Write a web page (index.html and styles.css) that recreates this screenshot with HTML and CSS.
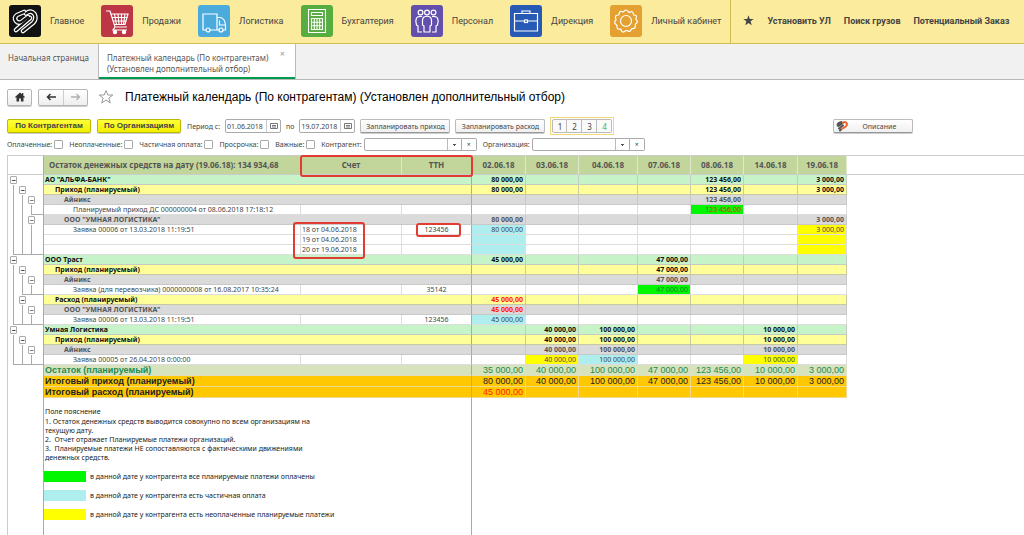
FILE: index.html
```html
<!DOCTYPE html>
<html lang="ru">
<head>
<meta charset="utf-8">
<title>Платежный календарь</title>
<link rel="stylesheet" href="styles.css">
</head>
<body>
<header class="topbar">
  <nav class="sections">
    <a class="section" href="#"><svg class="tile black" viewBox="0 0 32 32"><g fill="none" stroke-linejoin="round" stroke-linecap="round"><g stroke="#fff" stroke-width="4.600"><path d="M15 7 8 10Q4.500 12.500 7 16 9.500 19 13 16.500L19 12"/><path d="M17 8.500Q22 4.500 25.500 9 28 14 24 18L14 26"/><path d="M21 13 7 25"/></g><g stroke="#111" stroke-width="2.200"><path d="M15 7 8 10Q4.500 12.500 7 16 9.500 19 13 16.500L19 12"/><path d="M17 8.500Q22 4.500 25.500 9 28 14 24 18L14 26"/><path d="M21 13 7 25"/></g></g></svg><span>Главное</span></a>
    <a class="section" href="#"><svg class="tile red" viewBox="0 0 32 32"><g fill="none" stroke="#fff" stroke-width="1.2"><path d="M5 6h4l5 16h12M9.500 9H27l-3 10.500H13M10.500 12.500H26M11.500 16H25M13.500 9l2 10.500M17 9l1 10.500M20.500 9v10.500M24 9l-1.500 10.500M14 22l-2 3h14"/><circle cx="14" cy="27" r="1.600" fill="#fff"/><circle cx="23" cy="27" r="1.600" fill="#fff"/></g></svg><span>Продажи</span></a>
    <a class="section" href="#"><svg class="tile sky" viewBox="0 0 32 32"><g fill="none" stroke="#fff" stroke-width="1.2"><path d="M8 25H5V9h14v16h-7M19 12.500h3.500q4.500 1 5 8V25H25M21 25h-2M21.500 15.500v4.500h5.500"/><circle cx="10" cy="25" r="2"/><circle cx="23" cy="25" r="2"/></g></svg><span>Логистика</span></a>
    <a class="section" href="#"><svg class="tile green" viewBox="0 0 32 32"><g fill="none" stroke="#fff" stroke-width="1.1"><path d="M7.500 4.500h17v23h-17zM10.500 7.500h11v3h-11zM10.500 13.500h11v11h-11zM10.500 17.200h11M10.500 20.800h11M13.300 13.500v11M16 13.500v11M18.700 13.500v11"/></g></svg><span>Бухгалтерия</span></a>
    <a class="section" href="#"><svg class="tile violet" viewBox="0 0 32 32"><g fill="none" stroke="#fff" stroke-width="1.2" stroke-linejoin="round"><circle cx="9.500" cy="7.500" r="2.400"/><circle cx="16" cy="7.500" r="2.400"/><circle cx="22.500" cy="7.500" r="2.400"/><path d="M13 12q3-1.500 6 0 1.500 1 1.500 3.500V20l-1.500 1v6h-6v-6l-1.500-1v-4.500Q11.500 13 13 12zM11 11.500Q7 11 5.500 13 4 16 5.500 20l1.500 1v6h4M21 11.500q4-.500 5.500 1.500 1.500 3 0 7L25 21v6h-4"/></g></svg><span>Персонал</span></a>
    <a class="section" href="#"><svg class="tile blue" viewBox="0 0 32 32"><g fill="none" stroke="#fff" stroke-width="1.2"><path d="M4.500 8.500h23v17.500h-23zM12 8.500V6h8v2.500M4.500 16h10M17.500 16h10"/><rect x="14.500" y="15" width="3" height="2.500"/></g></svg><span>Дирекция</span></a>
    <a class="section" href="#"><svg class="tile orange" viewBox="0 0 32 32"><g fill="none" stroke="#fff" stroke-width="1.200" stroke-linejoin="round"><circle cx="16" cy="16" r="5.500"/><path d="M13.500 7Q16 3 18.500 7L19 7.500Q23 5 23.500 9.500L23.700 10Q28 10 25.700 14L26 14.500Q29 17 25.500 19L25.300 19.500Q26 24 22 23.500L21.500 24Q20 28 17 25.500L16 25.500Q12 29 11 24.500L10.500 24Q6 25 7 20.500L6.500 20Q3 17.500 6 15L6 14.500Q4 10 8.500 10L9 9.500Q9 5 13.500 7z"/></g></svg><span>Личный кабинет</span></a>
  </nav>
  <nav class="favorites">
    <svg class="fav-star" viewBox="0 0 12 12"><path fill="#444" d="M6 .300 7.400 4.300 11.700 4.300 8.300 6.900 9.500 11.200 6 8.700 2.500 11.200 3.700 6.900.300 4.300 4.600 4.300z"/></svg>
    <a href="#">Установить УЛ</a>
    <a href="#">Поиск грузов</a>
    <a href="#">Потенциальный Заказ</a>
  </nav>
</header>
<div class="tabs">
  <a class="tab" href="#">Начальная страница</a>
  <div class="tab active"><a href="#">Платежный календарь (По контрагентам)<br>(Установлен дополнительный отбор)</a><button class="tab-close" aria-label="Закрыть">×</button></div>
</div>
<main>
  <div class="titlebar">
    <button class="nav-btn" aria-label="Домой"><svg viewBox="0 0 10 10"><path fill="#333" d="M5 .500 0 5l.800.800L1.500 5.200V9.500h2.600V6.500h1.800v3h2.600V5.200l.700.600L10 5 8.300 3.400V1H7v1.200z"/></svg></button>
    <div class="nav-pair">
      <button aria-label="Назад"><svg viewBox="0 0 10 10"><path fill="none" stroke="#333" stroke-width="1.500" d="M10 5H1.500M4.500 2l-3 3 3 3"/></svg></button>
      <button aria-label="Вперед"><svg viewBox="0 0 10 10"><path fill="none" stroke="#b0b0b0" stroke-width="1.300" d="M0 5h8.500M5.500 2l3 3-3 3"/></svg></button>
    </div>
    <svg class="star" viewBox="0 0 16 16"><path fill="none" stroke="#999" d="M8 1.500 9.800 6H14.800L10.900 9 12.300 14 8 11 3.700 14 5.100 9 1.200 6H6.200z"/></svg>
    <h1>Платежный календарь (По контрагентам) (Установлен дополнительный отбор)</h1>
  </div>
  <div class="commands">
    <button class="btn accent">По Контрагентам</button>
    <button class="btn accent">По Организациям</button>
    <label for="from">Период с:</label>
    <span class="date"><input id="from" value="01.06.2018"><button aria-label="Календарь"><svg viewBox="0 0 8 8"><path fill="none" stroke="#777" d="M.500 1.500h7v5h-7zM2 3.500h4M2 5h4"/></svg></button></span>
    <label for="to">по</label>
    <span class="date"><input id="to" value="19.07.2018"><button aria-label="Календарь"><svg viewBox="0 0 8 8"><path fill="none" stroke="#777" d="M.500 1.500h7v5h-7zM2 3.500h4M2 5h4"/></svg></button></span>
    <button class="btn plan">Запланировать приход</button>
    <button class="btn plan">Запланировать расход</button>
    <div class="pager"><button>1</button><button>2</button><button>3</button><button class="on">4</button></div>
    <button class="btn about"><svg viewBox="0 0 12 12"><g fill="none" stroke-linecap="round"><path stroke="#555" stroke-width="2" d="M5.500 2 2.500 3.200Q1 4.500 2.200 6L6 4M3 8.500 7 5.500M4 10.500 5 9.500"/><path stroke="#999" stroke-width=".700" d="M3 7.200 7.500 3.800"/><path stroke="#e8622a" stroke-width="2" d="M7 3Q9 .800 10.600 3 11.500 5 9.800 6.500L6.500 8.500"/></g></svg><span>Описание</span></button>
  </div>
  <div class="filters">
    <label>Оплаченные: <input type="checkbox"></label>
    <label>Неоплаченные: <input type="checkbox"></label>
    <label>Частичная оплата: <input type="checkbox"></label>
    <label>Просрочка: <input type="checkbox"></label>
    <label>Важные: <input type="checkbox"></label>
    <div class="combo"><label for="partner">Контрагент:</label><select id="partner"><option></option></select><button aria-label="Очистить">×</button></div>
    <div class="combo"><label for="org">Организация:</label><select id="org"><option></option></select><button aria-label="Очистить">×</button></div>
  </div>
  <table class="sheet">
    <colgroup><col class="c-tree"><col class="c-name"><col class="c-bill"><col class="c-ttn"><col class="c-d1"><col class="c-d2"><col class="c-d3"><col class="c-d2"><col class="c-d2"><col class="c-d1"><col class="c-d4"><col></colgroup>
    <thead>
      <tr><td class="tree"></td><th class="name">Остаток денежных средств на дату (19.06.18): 134 934,68</th><th class="marked">Счет<span class="mark mark-head"></span></th><th class="split">ТТН</th><th>02.06.18</th><th>03.06.18</th><th>04.06.18</th><th>07.06.18</th><th>08.06.18</th><th>14.06.18</th><th>19.06.18</th><td></td></tr>
    </thead>
    <tbody>
      <tr class="partner"><td class="tree"><div><button>−</button></div></td><td>АО "АЛЬФА-БАНК"</td><td></td><td class="split"></td><td>80 000,00</td><td></td><td></td><td></td><td>123 456,00</td><td></td><td>3 000,00</td><td></td></tr>
      <tr class="flow"><td class="tree"><div><i></i><button>−</button></div></td><td>Приход (планируемый)</td><td></td><td class="split"></td><td>80 000,00</td><td></td><td></td><td></td><td>123 456,00</td><td></td><td>3 000,00</td><td></td></tr>
      <tr class="firm"><td class="tree"><div><i></i><i></i><button>−</button></div></td><td>Айникс</td><td></td><td class="split"></td><td></td><td></td><td></td><td></td><td>123 456,00</td><td></td><td></td><td></td></tr>
      <tr class="doc"><td class="tree"><div class="end3"><i></i><i></i><i></i></div></td><td>Планируемый приход ДС 000000004 от 08.06.2018 17:18:12</td><td></td><td class="split"></td><td></td><td></td><td></td><td></td><td class="paid late">123 456,00</td><td></td><td></td><td></td></tr>
      <tr class="firm"><td class="tree"><div><i></i><i></i><button>−</button></div></td><td>ООО "УМНАЯ ЛОГИСТИКА"</td><td></td><td class="split"></td><td>80 000,00</td><td></td><td></td><td></td><td></td><td></td><td>3 000,00</td><td></td></tr>
      <tr class="doc"><td class="tree"><div><i></i><i></i><i></i></div></td><td>Заявка 00006 от 13.03.2018 11:19:51</td><td class="marked">18 от 04.06.2018<span class="mark mark-bills"></span></td><td class="split marked">123456<span class="mark mark-ttn"></span></td><td class="part">80 000,00</td><td></td><td></td><td></td><td></td><td></td><td class="unpaid">3 000,00</td><td></td></tr>
      <tr class="doc"><td class="tree"><div><i></i><i></i><i></i></div></td><td></td><td>19 от 04.06.2018</td><td class="split"></td><td class="part"></td><td></td><td></td><td></td><td></td><td></td><td class="unpaid"></td><td></td></tr>
      <tr class="doc"><td class="tree"><div class="end1"><i></i><i></i><i></i></div></td><td></td><td>20 от 19.06.2018</td><td class="split"></td><td class="part"></td><td></td><td></td><td></td><td></td><td></td><td class="unpaid"></td><td></td></tr>
      <tr class="partner"><td class="tree"><div><button>−</button></div></td><td>ООО Траст</td><td></td><td class="split"></td><td>45 000,00</td><td></td><td></td><td>47 000,00</td><td></td><td></td><td></td><td></td></tr>
      <tr class="flow"><td class="tree"><div><i></i><button>−</button></div></td><td>Приход (планируемый)</td><td></td><td class="split"></td><td></td><td></td><td></td><td>47 000,00</td><td></td><td></td><td></td><td></td></tr>
      <tr class="firm"><td class="tree"><div><i></i><i></i><button>−</button></div></td><td>Айникс</td><td></td><td class="split"></td><td></td><td></td><td></td><td>47 000,00</td><td></td><td></td><td></td><td></td></tr>
      <tr class="doc"><td class="tree"><div class="end2"><i></i><i></i><i></i></div></td><td>Заявка (для перевозчика) 0000000008 от 16.08.2017 10:35:24</td><td></td><td class="split">35142</td><td></td><td></td><td></td><td class="paid">47 000,00</td><td></td><td></td><td></td><td></td></tr>
      <tr class="flow"><td class="tree"><div><i></i><button>−</button></div></td><td>Расход (планируемый)</td><td></td><td class="split"></td><td class="minus">45 000,00</td><td></td><td></td><td></td><td></td><td></td><td></td><td></td></tr>
      <tr class="firm"><td class="tree"><div><i></i><i></i><button>−</button></div></td><td>ООО "УМНАЯ ЛОГИСТИКА"</td><td></td><td class="split"></td><td class="minus">45 000,00</td><td></td><td></td><td></td><td></td><td></td><td></td><td></td></tr>
      <tr class="doc"><td class="tree"><div class="end1"><i></i><i></i><i></i></div></td><td>Заявка 00006 от 13.03.2018 11:19:51</td><td></td><td class="split">123456</td><td class="part">45 000,00</td><td></td><td></td><td></td><td></td><td></td><td></td><td></td></tr>
      <tr class="partner"><td class="tree"><div><button>−</button></div></td><td>Умная Логистика</td><td></td><td class="split"></td><td></td><td>40 000,00</td><td>100 000,00</td><td></td><td></td><td>10 000,00</td><td></td><td></td></tr>
      <tr class="flow"><td class="tree"><div><i></i><button>−</button></div></td><td>Приход (планируемый)</td><td></td><td class="split"></td><td></td><td>40 000,00</td><td>100 000,00</td><td></td><td></td><td>10 000,00</td><td></td><td></td></tr>
      <tr class="firm"><td class="tree"><div><i></i><i></i><button>−</button></div></td><td>Айникс</td><td></td><td class="split"></td><td></td><td>40 000,00</td><td>100 000,00</td><td></td><td></td><td>10 000,00</td><td></td><td></td></tr>
      <tr class="doc"><td class="tree"><div class="end1"><i></i><i></i><i></i></div></td><td>Заявка 00005 от 26.04.2018 0:00:00</td><td></td><td class="split"></td><td></td><td class="unpaid">40 000,00</td><td class="part">100 000,00</td><td></td><td></td><td class="unpaid">10 000,00</td><td></td><td></td></tr>
      <tr class="total rest"><td class="tree"></td><td>Остаток (планируемый)</td><td></td><td class="split"></td><td>35 000,00</td><td>40 000,00</td><td>100 000,00</td><td>47 000,00</td><td>123 456,00</td><td>10 000,00</td><td>3 000,00</td><td></td></tr>
      <tr class="total"><td class="tree"></td><td>Итоговый приход (планируемый)</td><td></td><td class="split"></td><td>80 000,00</td><td>40 000,00</td><td>100 000,00</td><td>47 000,00</td><td>123 456,00</td><td>10 000,00</td><td>3 000,00</td><td></td></tr>
      <tr class="total"><td class="tree"></td><td>Итоговый расход (планируемый)</td><td></td><td class="split"></td><td class="minus">45 000,00</td><td></td><td></td><td></td><td></td><td></td><td></td><td></td></tr>
    </tbody>
    <tfoot>
      <tr><td class="tree"></td><td class="notes split" colspan="3">
        <p class="caption">Поле пояснение</p>
        <p>1. Остаток денежных средств выводится совокупно по всем организациям на<br>текущую дату.</p>
        <p>2.&nbsp; Отчет отражает Планируемые платежи организаций.</p>
        <p>3.&nbsp; Планируемые платежи НЕ сопоставляются с фактическими движениями<br>денежных средств.</p>
        <ul class="legend">
          <li><span class="swatch paid"></span>в данной дате у контрагента все планируемые платежи оплачены</li>
          <li><span class="swatch part"></span>в данной дате у контрагента есть частичная оплата</li>
          <li><span class="swatch unpaid"></span>в данной дате у контрагента есть неоплаченные планируемые платежи</li>
        </ul>
      </td><td colspan="8"></td></tr>
    </tfoot>
  </table>
</main>
</body>
</html>
```
FILE: styles.css
```css
* { box-sizing: border-box; }
body {
  margin: 0;
  background: #fff;
  color: #444;
  font: 7px/9px "Noto Sans", sans-serif;
}
a { color: inherit; text-decoration: none; }
button, input, select { margin: 0; font: inherit; color: inherit; padding: 0; }

.topbar {
  display: flex;
  height: 44px;
  background: #fbeb9c;
  border-bottom: 1px solid #cfbd52;
  font: 9px/12px Roboto, sans-serif;
  white-space: nowrap;
}
.sections { display: flex; gap: 17px; padding: 4px 9px 0 9px; }
.section { display: flex; align-items: center; gap: 9px; height: 33px; }
.tile { width: 32px; height: 32px; border-radius: 3px; }
.black { background: #111; }
.red { background: #bd3646; }
.sky { background: #4babdd; }
.green { background: #57ad3f; }
.violet { background: #6350ac; }
.blue { background: #265ab5; }
.orange { background: #e5a032; }
.favorites {
  display: flex;
  align-items: center;
  gap: 13px;
  padding: 0 6px 2px 12px;
  border-left: 1px solid #cfbd52;
  font-weight: bold;
}
.fav-star { width: 11px; height: 11px; }

.tabs {
  display: flex;
  height: 36px;
  background: #f1f1f1;
  border-bottom: 1px solid #b8b8b8;
  font: 8px/11px "Noto Sans", sans-serif;
  color: #555;
}
.tab { padding: 8px 9px 0 8px; }
.tab.active {
  display: flex;
  gap: 10px;
  background: #fff;
  border: solid #bbb;
  border-width: 0 1px;
  box-shadow: inset 0 -2px #009a4e;
}
.tab-close { align-self: flex-start; width: 8px; height: 5px; border: 0; background: none; color: #999; line-height: 5px; font-size: 9px; margin-top: -1px; }

.titlebar { display: flex; align-items: center; height: 34px; padding: 0 7px; }
.nav-btn, .nav-pair {
  height: 17px;
  border: 1px solid #b5b5b5;
  border-radius: 2px;
  background: linear-gradient(#fff, #eee);
  box-shadow: 0 1px #ccc;
}
.nav-btn { width: 25px; margin-right: 6px; }
.nav-pair { display: flex; }
.nav-pair button { width: 24px; border: 0; background: none; }
.nav-pair button + button { border-left: 1px solid #ccc; }
.nav-btn svg, .nav-pair svg { display: block; width: 10px; height: 10px; margin: auto; }
.star { width: 16px; height: 16px; margin: 0 11px 0 10px; }
h1 { margin: 0; font: 12px/16px "Liberation Sans", sans-serif; color: #000; }

.commands { display: flex; align-items: center; height: 24px; padding: 0 7px; white-space: nowrap; }
.btn {
  height: 14px;
  border: 1px solid #bbb;
  border-bottom-color: #999;
  border-radius: 2px;
  background: linear-gradient(#fff, #f0f0f0);
  box-shadow: 0 1px #ccc;
}
.accent {
  width: 84px;
  margin-right: 6px;
  border-color: #b9b900;
  background: linear-gradient(#ffff3a, #f2ee00);
  font: bold 8px/10px "Liberation Sans", sans-serif;
}
.date { display: flex; width: 56px; height: 14px; margin: 0 5px 0 5px; border: 1px solid #aaa; border-radius: 2px; }
.date input { flex: 1; min-width: 0; padding-left: 1px; border: 0; background: none; font-size: 7px; }
.date button { width: 14px; border: 0; border-left: 1px solid #ccc; background: none; }
.date svg { display: block; width: 8px; height: 8px; margin: auto; }
.plan { width: 90px; margin-right: 5px; }
.pager { display: flex; height: 18px; padding: 1px; border: 1px solid #f3d977; }
.pager button { width: 15px; border: 1px solid #bbb; border-left-width: 0; background: #fafafa; font-size: 8px; }
.pager button:first-child { border-left-width: 1px; border-radius: 2px 0 0 2px; }
.pager button:last-child { border-radius: 0 2px 2px 0; }
.pager .on { color: #2bb673; }
.about { display: flex; align-items: center; width: 80px; margin-left: 219px; padding-left: 2px; gap: 14px; }
.about svg { width: 12px; height: 12px; }

.filters { display: flex; gap: 6px; height: 17px; padding: 0 7px; white-space: nowrap; }
.filters label { display: flex; align-items: center; gap: 2px; height: 13px; }
.filters input { appearance: none; width: 9px; height: 9px; border: 1px solid #aaa; border-radius: 1px; background: #fff; }
.combo { display: flex; align-items: center; height: 13px; }
.combo select {
  appearance: none;
  width: 98px;
  height: 13px;
  margin-left: 2px;
  border: 1px solid #aaa;
  border-radius: 2px 0 0 2px;
  background:
    linear-gradient(#bbb, #bbb) 82px 0 / 1px 100% no-repeat,
    linear-gradient(to bottom right, #555 50%, transparent 50%) 90px 5px / 2px 2px no-repeat,
    linear-gradient(to bottom left, #555 50%, transparent 50%) 88px 5px / 2px 2px no-repeat,
    #fff;
}
.combo button { width: 15px; height: 13px; border: 1px solid #aaa; border-left: 0; border-radius: 0 2px 2px 0; background: #fff; }

.sheet { width: calc(100% - 7px); margin-left: 7px; table-layout: fixed; border-collapse: separate; border-spacing: 0; border-left: 1px solid #ccc; }
.c-tree { width: 36px; }
.c-name { width: 257px; }
.c-bill { width: 101px; }
.c-ttn { width: 70px; }
.c-d1 { width: 54px; }
.c-d2 { width: 53px; }
.c-d3 { width: 59px; }
.c-d4 { width: 49px; }
.sheet td, .sheet th { padding: 0; white-space: nowrap; }
.marked { position: relative; }
.mark { position: absolute; border: 2px solid #e23b31; border-radius: 3px; }
.mark-head { left: -1px; top: -1px; width: 173px; height: 22px; }
.mark-bills { left: -8px; top: -3px; width: 72px; height: 37px; }
.mark-ttn { left: 14px; top: -2px; width: 45px; height: 14px; }

thead th, thead td { height: 20px; border-top: 1px solid #ccc; border-bottom: 1px solid #ccc; }
thead th { background: #c2d69b; border-right: 1px solid #dfe8cd; font: bold 8px/10px "Noto Sans", sans-serif; color: #555; }
.sheet .name { border-right-color: #c2d69b; text-align: left; padding-left: 5px; }
.sheet .tree { border-right: 1px solid #aaa; border-bottom: 0; background: #fff; padding: 0; }
.sheet thead .tree { border-bottom: 1px solid #ccc; }
.sheet .split { border-right: 1px solid #aaa; text-align: center; }

tbody td { height: 10px; line-height: 9px; border-right: 1px solid #ddd; border-bottom: 1px solid #ddd; text-align: right; }
.sheet tbody td:nth-child(n+5) { padding-right: 2px; }
.sheet tbody td:nth-child(2), .sheet tbody td:nth-child(3) { text-align: left; padding-left: 1px; }
.sheet tbody td:last-child { border: 0; background: #fff; }
.partner td { background: #c6f3c8; border-color: #c4ccc4; color: #111; font-weight: bold; }
.flow td { background: #ffff99; border-color: #c9c9a0; color: #111; font-weight: bold; }
.firm td { background: #dadada; border-color: #c8c8c8; color: #555; font-weight: bold; }
.partner td:nth-child(2), .partner td:nth-child(3),
.flow td:nth-child(2), .flow td:nth-child(3),
.firm td:nth-child(2), .firm td:nth-child(3) { border-right: 0; }
.sheet .flow td:nth-child(2) { padding-left: 11px; }
.sheet .firm td:nth-child(2) { padding-left: 20px; }
.sheet .doc td:nth-child(2) { padding-left: 29px; }
.sheet .paid { background: #00f700; color: #2b7a2b; }
.sheet .late { color: #b4441c; }
.sheet .part { background: #aeeeee; }
.sheet .unpaid { background: #ffff00; }
.sheet .minus { color: #ff2200; }
.total td { height: 11px; line-height: 10px; background: #ffc800; border-color: #f0d890; color: #222; font-family: "Liberation Sans", sans-serif; font-size: 9px; }
.total td:nth-child(2) { font-weight: bold; }
.total td:nth-child(2), .total td:nth-child(3) { border-right: 0; }
.rest td { background: #d6e3bc; color: #1d8a52; border-color: #dfe0c0; }

.tree div { display: flex; height: 10px; padding-left: 1px; }
.tree i { width: 9px; background: linear-gradient(#aaa, #aaa) 4px 0 / 1px 100% no-repeat; }
.tree button { width: 7px; height: 8px; margin: 1px; border: 1px solid #aaa; border-radius: 1px; background: #fff; line-height: 5px; }
.tree .end1 { background: linear-gradient(#aaa, #aaa) 5px 100% / 100% 1px no-repeat; }
.tree .end2 { background: linear-gradient(#aaa, #aaa) 14px 100% / 100% 1px no-repeat; }
.tree .end3 { background: linear-gradient(#aaa, #aaa) 23px 100% / 100% 1px no-repeat; }

.sheet .notes { height: 137px; padding: 9px 0 0 1px; text-align: left; vertical-align: top; color: #222; }
.notes p { margin: 0; }
.notes .caption { margin-bottom: 1px; }
.legend { display: flex; flex-direction: column; gap: 8px; margin: 9px 0 0 -1px; padding: 0; list-style: none; }
.legend li { display: flex; align-items: center; gap: 4px; height: 11px; }
.swatch { width: 42px; height: 11px; }
```
